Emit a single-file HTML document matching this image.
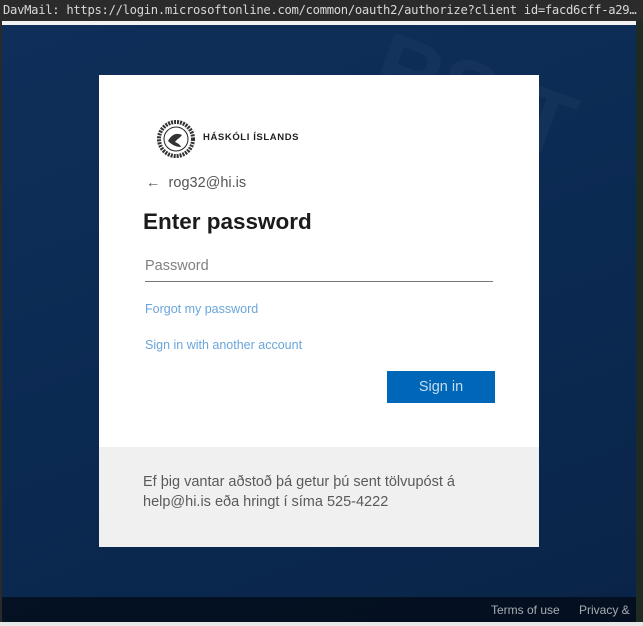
<!DOCTYPE html>
<html><head><meta charset="utf-8"><style>
*{margin:0;padding:0;box-sizing:border-box}
body{width:643px;height:626px;overflow:hidden;background:#2a2a2a;font-family:"Liberation Sans",sans-serif;position:relative}
.title{position:absolute;left:0;top:0;width:643px;height:21px;background:#2b2b2b;color:#d8d8d8;font:12.2px "DejaVu Sans Mono","Liberation Mono",monospace;line-height:21px;padding-left:3px;white-space:nowrap;overflow:hidden;letter-spacing:-0.3px}
.wl{position:absolute;left:2px;top:21px;width:634px;height:4px;background:#f2f2f2}
.bg{position:absolute;left:2px;top:25px;width:634px;height:597px;background:linear-gradient(160deg,#0f2f5a 0%,#0b2a52 50%,#0a2448 100%);overflow:hidden}
.bgtxt{position:absolute;left:370px;top:20px;font-size:90px;font-weight:bold;color:rgba(255,255,255,0.03);transform:rotate(20deg)}
.foot{position:absolute;left:0;top:572px;width:634px;height:25px;background:rgba(0,0,0,0.55);color:#a8acb2;font-size:12px;line-height:27px}
.edge{position:absolute;left:636px;top:21px;width:7px;height:605px;background:#1f2a22}
.bottomline{position:absolute;left:0;top:622px;width:643px;height:4px;background:#e8e8e8}
.card{position:absolute;left:99px;top:75px;width:440px;height:472px;background:#fff}
.grey{position:absolute;left:0;top:372px;width:440px;height:100px;background:#f0f0f0;color:#5a5a5a;font-size:14.5px;line-height:20px;padding:25px 44px}
</style></head><body>
<div class="title">DavMail: https://login.microsoftonline.com/common/oauth2/authorize?client id=facd6cff-a29…</div>
<div class="wl"></div>
<div class="edge"></div>
<div class="bg">
 <div class="bgtxt">RSIT</div>
 <div class="foot"><span style="position:absolute;left:489px">Terms of use</span><span style="position:absolute;left:577px">Privacy &amp; c</span></div>
</div>
<div class="bottomline"></div>
<div class="card">
 <svg style="position:absolute;left:57px;top:44px" width="40" height="40" viewBox="0 0 40 40"><circle cx="20" cy="20" r="17" fill="none" stroke="#333" stroke-width="4" stroke-dasharray="2 1"/><circle cx="20" cy="20" r="12" fill="#fff" stroke="#222" stroke-width="1"/><path d="M12 22c3-6 8-9 14-6-2 3-5 4-7 7 2 1 5 2 6 5-5 0-9-2-13-6z" fill="#333"/></svg>
 <div style="position:absolute;left:104px;top:57px;font-size:9.5px;font-weight:bold;letter-spacing:0.6px;color:#222">HÁSKÓLI ÍSLANDS</div>
 <div style="position:absolute;left:47px;top:100px;font-size:14.5px;color:#555">&#8592;&nbsp; rog32@hi.is</div>
 <div style="position:absolute;left:44px;top:134px;font-size:22.5px;font-weight:bold;color:#1b1b1b">Enter password</div>
 <div style="position:absolute;left:46px;top:183px;font-size:14.5px;color:#808080">Password</div>
 <div style="position:absolute;left:46px;top:206px;width:348px;height:1px;background:#777"></div>
 <div style="position:absolute;left:46px;top:227px;font-size:12.5px;color:#6aa5dc">Forgot my password</div>
 <div style="position:absolute;left:46px;top:263px;font-size:12.5px;color:#6aa5dc">Sign in with another account</div>
 <div style="position:absolute;left:288px;top:296px;width:108px;height:32px;background:#0067b8;color:#c5dcf0;font-size:14.5px;text-align:center;line-height:33px">Sign in</div>
 <div class="grey">Ef þig vantar aðstoð þá getur þú sent tölvupóst á help@hi.is eða hringt í síma 525-4222</div>
</div>
</body></html>
